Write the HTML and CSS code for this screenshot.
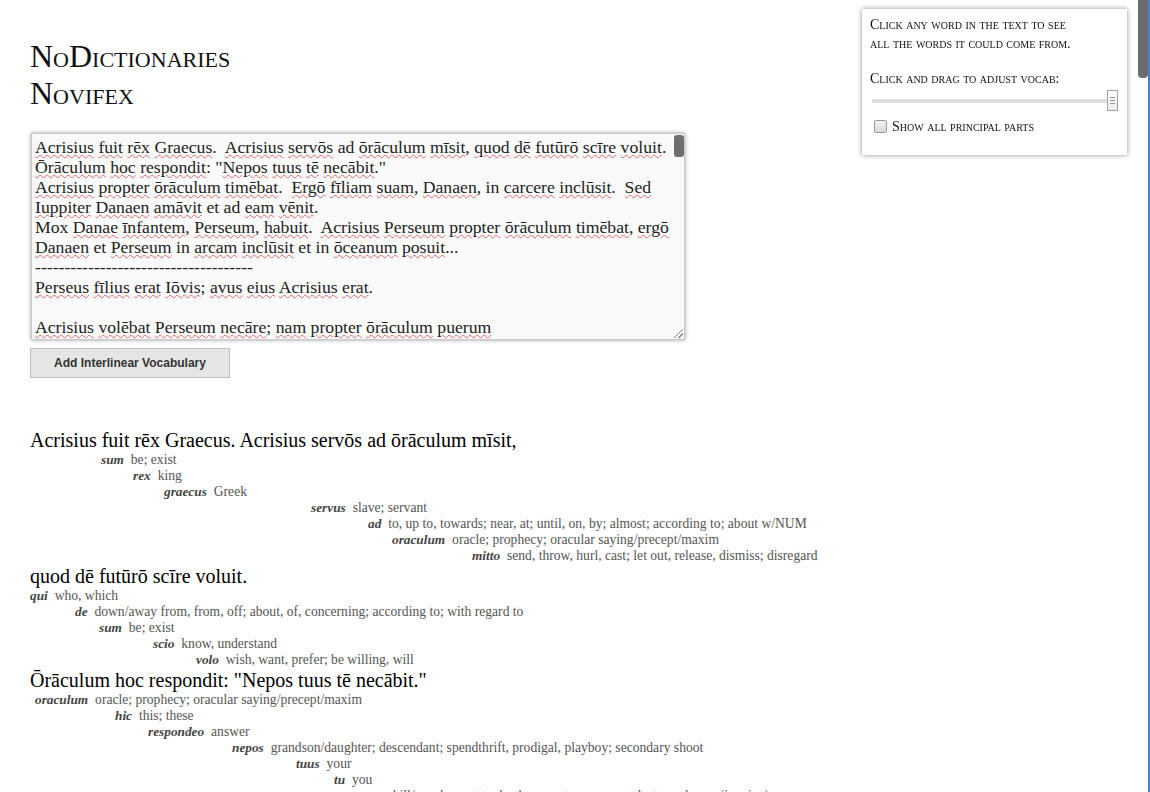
FILE: index.html
```html
<!DOCTYPE html>
<html lang="la">
<head>
<meta charset="utf-8">
<title>NoDictionaries Novifex</title>
<link rel="stylesheet" href="styles.css">
</head>
<body>
<div class="page">
  <h1 class="title">NoDictionaries<br>Novifex</h1>

  <div class="editor">
<pre class="editor-text"><u>Acrisius</u> <u>fuit</u> <u>rēx</u> <u>Graecus</u>.  <u>Acrisius</u> <u>servōs</u> ad <u>ōrāculum</u> <u>mīsit</u>, <u>quod</u> <u>dē</u> <u>futūrō</u> <u>scīre</u> <u>voluit</u>.
<u>Ōrāculum</u> <u>hoc</u> <u>respondit</u>: "<u>Nepos</u> <u>tuus</u> <u>tē</u> <u>necābit</u>."
<u>Acrisius</u> <u>propter</u> <u>ōrāculum</u> <u>timēbat</u>.  <u>Ergō</u> <u>fīliam</u> <u>suam</u>, <u>Danaen</u>, in <u>carcere</u> <u>inclūsit</u>.  <u>Sed</u>
<u>Iuppiter</u> <u>Danaen</u> <u>amāvit</u> et ad <u>eam</u> <u>vēnit</u>.
Mox <u>Danae</u> <u>īnfantem</u>, <u>Perseum</u>, <u>habuit</u>.  <u>Acrisius</u> <u>Perseum</u> <u>propter</u> <u>ōrāculum</u> <u>timēbat</u>, <u>ergō</u>
<u>Danaen</u> et <u>Perseum</u> in <u>arcam</u> <u>inclūsit</u> et in <u>ōceanum</u> <u>posuit</u>...
-------------------------------------
<u>Perseus</u> <u>fīlius</u> <u>erat</u> <u>Iōvis</u>; <u>avus</u> <u>eius</u> <u>Acrisius</u> <u>erat</u>.

<u>Acrisius</u> <u>volēbat</u> <u>Perseum</u> <u>necāre</u>; <u>nam</u> <u>propter</u> <u>ōrāculum</u> <u>puerum</u></pre>
    <span class="editor-thumb"></span>
    <span class="editor-grip"></span>
  </div>

  <button class="add-btn" type="button">Add Interlinear Vocabulary</button>

  <div class="reading">
    <div class="chunk">
      <p class="sentence">Acrisius fuit rēx Graecus. Acrisius servōs ad ōrāculum mīsit,</p>
      <ul class="vocab">
        <li style="padding-left:71px"><b>sum</b> be; exist</li>
        <li style="padding-left:103px"><b>rex</b> king</li>
        <li style="padding-left:134px"><b>graecus</b> Greek</li>
        <li style="padding-left:281px"><b>servus</b> slave; servant</li>
        <li style="padding-left:338px"><b>ad</b> to, up to, towards; near, at; until, on, by; almost; according to; about w/NUM</li>
        <li style="padding-left:362px"><b>oraculum</b> oracle; prophecy; oracular saying/precept/maxim</li>
        <li style="padding-left:442px"><b>mitto</b> send, throw, hurl, cast; let out, release, dismiss; disregard</li>
      </ul>
    </div>
    <div class="chunk">
      <p class="sentence">quod dē futūrō scīre voluit.</p>
      <ul class="vocab">
        <li style="padding-left:0px"><b>qui</b> who, which</li>
        <li style="padding-left:45px"><b>de</b> down/away from, from, off; about, of, concerning; according to; with regard to</li>
        <li style="padding-left:69px"><b>sum</b> be; exist</li>
        <li style="padding-left:123px"><b>scio</b> know, understand</li>
        <li style="padding-left:166px"><b>volo</b> wish, want, prefer; be willing, will</li>
      </ul>
    </div>
    <div class="chunk">
      <p class="sentence">Ōrāculum hoc respondit: "Nepos tuus tē necābit."</p>
      <ul class="vocab">
        <li style="padding-left:5px"><b>oraculum</b> oracle; prophecy; oracular saying/precept/maxim</li>
        <li style="padding-left:85px"><b>hic</b> this; these</li>
        <li style="padding-left:118px"><b>respondeo</b> answer</li>
        <li style="padding-left:202px"><b>nepos</b> grandson/daughter; descendant; spendthrift, prodigal, playboy; secondary shoot</li>
        <li style="padding-left:266px"><b>tuus</b> your</li>
        <li style="padding-left:304px"><b>tu</b> you</li>
        <li style="padding-left:330px"><b>neco</b> kill/murder; put to death, execute; suppress, destroy; drown (in wine)</li>
      </ul>
    </div>
  </div>
</div>

<aside class="panel">
  <p class="panel-note">Click any word in the text to see<br>all the words it could come from.</p>
  <p class="panel-label">Click and drag to adjust vocab:</p>
  <div class="slider">
    <span class="slider-track"></span>
    <span class="slider-thumb"><i></i><i></i><i></i></span>
  </div>
  <label class="panel-check"><span class="check-box"></span>Show all principal parts</label>
</aside>

<div class="page-scroll"><span class="page-thumb"></span></div>
</body>
</html>
```

FILE: styles.css
```css
html, body {
  margin: 0;
  padding: 0;
  background: #fff;
}
html { overflow: hidden; }
body {
  font-family: "Liberation Serif", "Times New Roman", serif;
  color: #111;
  height: 792px;
  overflow: hidden;
}

.page {
  padding: 0 30px;
}

.title {
  margin: 38px 0 0;
  font-size: 32px;
  line-height: 37px;
  font-weight: normal;
  font-variant: small-caps;
  color: #111;
}

/* text input area */
.editor {
  position: relative;
  margin: 21px 0 0 1px;
  width: 652px;
  height: 205px;
  border: 1px solid #c9c9c9;
  background: #fafafa;
  box-shadow: 0 0 4px rgba(0, 0, 0, 0.4);
  overflow: hidden;
}
.editor-text {
  margin: 0;
  padding: 3px 3px;
  font-family: "Liberation Serif", "Times New Roman", serif;
  font-size: 17.7px;
  line-height: 20px;
  color: #222;
  white-space: pre;
}
.editor-text u {
  text-decoration: underline wavy rgba(225, 60, 60, 0.75);
  text-decoration-thickness: 1px;
  text-underline-offset: 1px;
}
.editor-thumb {
  position: absolute;
  top: 1px;
  right: 0px;
  width: 10px;
  height: 22px;
  border-radius: 3px;
  background: #6e6e6e;
}
.editor-grip {
  position: absolute;
  right: 1px;
  bottom: 1px;
  width: 9px;
  height: 9px;
  background:
    linear-gradient(135deg, transparent 45%, #888 45%, #888 55%, transparent 55%, transparent 72%, #888 72%, #888 80%, transparent 80%);
}

.add-btn {
  display: block;
  margin-top: 8px;
  width: 200px;
  height: 30px;
  padding: 0;
  border: 1px solid #bdbdbd;
  background: #e6e6e6;
  font-family: "Liberation Sans", Arial, sans-serif;
  font-size: 12px;
  font-weight: bold;
  color: #333;
}

/* interlinear reading */
.reading {
  margin-top: 50px;
}
.sentence {
  margin: 0;
  font-size: 20px;
  line-height: 24px;
  color: #000;
}
.vocab {
  list-style: none;
  margin: 0;
  padding: 0;
  font-size: 13.6px;
  line-height: 16px;
  color: #555;
  white-space: nowrap;
}
.vocab b {
  font-size: 13.3px;
  font-style: italic;
  font-weight: bold;
  color: #444;
  margin-right: 3.5px;
}

/* floating control panel */
.panel {
  position: fixed;
  left: 862px;
  top: 9px;
  width: 249px;
  height: 140px;
  padding: 6px 8px 0;
  background: #fff;
  box-shadow: 0 0 5px rgba(0, 0, 0, 0.45);
  font-variant: small-caps;
  font-size: 14px;
  line-height: 19px;
  color: #111;
}
.panel-note { margin: 0; }
.panel-label { margin: 16px 0 0; }
.slider {
  position: relative;
  margin: 2px 0 0 2px;
  height: 21px;
  width: 246px;
}
.slider-track {
  position: absolute;
  left: 0;
  right: 8px;
  top: 9px;
  height: 4px;
  background: #dcdcdc;
}
.slider-thumb {
  position: absolute;
  left: 235px;
  top: 0;
  width: 9px;
  height: 19px;
  border: 1px solid #a0a0a0;
  background: linear-gradient(#fdfdfd, #ececec);
  display: flex;
  flex-direction: column;
  justify-content: center;
  align-items: center;
  gap: 2px;
}
.slider-thumb i {
  display: block;
  width: 5px;
  height: 1px;
  background: #999;
}
.panel-check {
  display: flex;
  align-items: center;
  margin-top: 6px;
  padding-left: 4px;
}
.check-box {
  width: 11px;
  height: 11px;
  margin-right: 5px;
  border: 1px solid #9a9a9a;
  border-radius: 2px;
  background: linear-gradient(#f4f4f4, #d8d8d8);
}

/* page scrollbar */
.page-scroll {
  position: fixed;
  top: 0;
  right: 0;
  width: 14px;
  height: 100%;
  background: #fff;
  border-right: 2px solid #4a7fc8;
  box-sizing: border-box;
}
.page-scroll .page-thumb {
  display: block;
  margin: 0 0 0 2px;
  width: 10px;
  height: 78px;
  border-radius: 0 0 4px 4px;
  background: #6b6b6b;
}
```
